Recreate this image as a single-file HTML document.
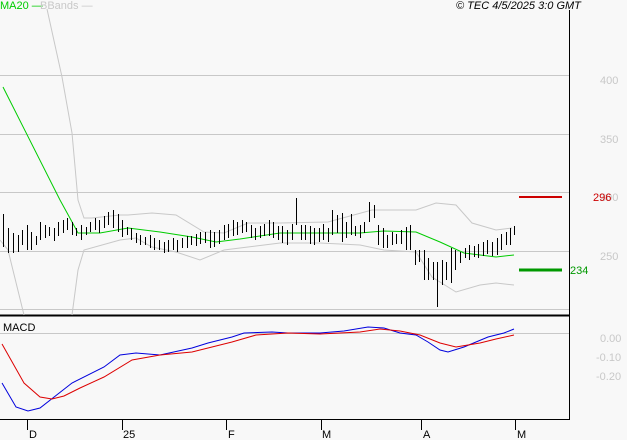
<!DOCTYPE html><html><head><style>body{margin:0;background:#f8f8f8}svg{display:block}text{font-family:"Liberation Sans",sans-serif;font-size:11px}</style></head><body>
<svg width="627" height="440" viewBox="0 0 627 440" xmlns="http://www.w3.org/2000/svg">
<rect width="627" height="440" fill="#f8f8f8"/>
<g stroke="#c8c8c8" stroke-width="1">
<line x1="0" y1="75.5" x2="569" y2="75.5"/><line x1="0" y1="134.5" x2="569" y2="134.5"/><line x1="0" y1="192.5" x2="569" y2="192.5"/><line x1="0" y1="251.5" x2="569" y2="251.5"/><line x1="0" y1="309.5" x2="569" y2="309.5"/><line x1="0" y1="333.5" x2="569" y2="333.5"/>
</g>
<line x1="569.5" y1="10" x2="569.5" y2="420" stroke="#000"/>
<line x1="0" y1="315.5" x2="569" y2="315.5" stroke="#000" stroke-width="2"/>
<line x1="0" y1="419.5" x2="569" y2="419.5" stroke="#000"/>
<g stroke="#000"><line x1="27.5" y1="420" x2="27.5" y2="430"/><line x1="122.5" y1="420" x2="122.5" y2="430"/><line x1="226.5" y1="420" x2="226.5" y2="430"/><line x1="321.5" y1="420" x2="321.5" y2="430"/><line x1="421.5" y1="420" x2="421.5" y2="430"/><line x1="515.5" y1="420" x2="515.5" y2="430"/></g>
<g font-size="12"><text x="29" y="438" font-size="12">D</text><text x="123" y="438" font-size="12">25</text><text x="228" y="438" font-size="12">F</text><text x="322" y="438" font-size="12">M</text><text x="423" y="438" font-size="12">A</text><text x="517" y="438" font-size="12">M</text></g>
<g fill="#c8c8c8"><text x="600" y="84">400</text><text x="600" y="143">350</text><text x="600" y="201">300</text><text x="600" y="260">250</text><text x="600" y="342">0.00</text><text x="596" y="361">-0.10</text><text x="596" y="380">-0.20</text></g>
<text x="0" y="9" fill="#00cc00" font-size="10">MA20 —</text><text x="40" y="9" fill="#c8c8c8" font-size="10">BBands —</text>
<text x="456" y="9" font-size="10" font-style="italic">© TEC 4/5/2025 3:0 GMT</text>
<text x="3" y="331" font-size="10">MACD</text>
<g fill="none" stroke="#c8c8c8">
<polyline points="47,9 62,77 72,133 78,200 84,218 92,218 120,215 128,215 152,213 176,215 204,232 224,233 248,223 280,223 328,222 372,210 416,210 436,203 456,205 472,223 496,230 512,228"/>
<polyline points="0,240 8,250 24,315"/>
<polyline points="72,315 78,270 84,250 120,240 136,238 152,247 176,252 200,260 224,250 280,243 320,243 360,245 384,250 416,252 432,277 456,292 480,285 496,283 514,285"/>
</g>
<polyline fill="none" stroke="#00cc00" points="3,87 60,200 71,220 78,233 100,233 128,228 160,232 192,237 216,242 240,239 280,233 320,233 360,233 384,231 416,232 440,242 464,253 496,257 514,255"/>
<line x1="519" y1="197" x2="562" y2="197" stroke="#cc0000" stroke-width="2"/><text x="593" y="201" fill="#cc0000">296</text>
<line x1="519" y1="270" x2="562" y2="270" stroke="#009900" stroke-width="3"/><text x="570" y="274" fill="#009900">234</text>
<path stroke="#000" fill="none" d="M3.5 214V247M8.5 228V253M13.5 233V253M18.5 235V252M22.5 230V245M27.5 225V250M31.5 232V250M36.5 236V245M40.5 222V240M45.5 225V238M49.5 227V236M54.5 228V241M58.5 222V236M63.5 220V233M67.5 218V230M72.5 222V235M76.5 228V236M81.5 225V240M86.5 227V235M90.5 222V232M95.5 218V230M99.5 220V233M104.5 216V228M108.5 212V225M113.5 210V228M118.5 214V232M122.5 220V237M127.5 227V235M131.5 228V240M136.5 233V243M140.5 235V245M145.5 237V245M150.5 235V248M154.5 238V250M159.5 240V250M164.5 242V253M168.5 240V252M173.5 238V250M177.5 240V252M182.5 238V248M187.5 236V248M191.5 236V245M196.5 234V246M200.5 232V244M205.5 232V243M210.5 230V248M214.5 232V247M219.5 230V244M224.5 225V240M228.5 224V238M233.5 220V236M237.5 222V235M242.5 220V233M246.5 222V232M251.5 225V238M255.5 228V240M260.5 226V238M264.5 224V236M269.5 220V236M273.5 222V238M278.5 226V240M282.5 226V243M287.5 230V245M292.5 224V240M296.5 198V225M301.5 225V240M305.5 225V240M310.5 226V244M314.5 228V245M319.5 228V242M323.5 224V240M328.5 228V242M332.5 210V235M337.5 215V233M342.5 213V242M346.5 222V238M351.5 214V235M355.5 226V236M360.5 225V238M364.5 222V233M369.5 202V222M374.5 205V218M378.5 225V245M383.5 228V248M387.5 235V248M392.5 232V245M396.5 234V244M401.5 230V244M406.5 227V250M410.5 225V250M415.5 250V265M419.5 250V262M424.5 250V280M428.5 258V280M433.5 262V280M437.5 262V307M442.5 260V285M446.5 262V280M451.5 248V283M455.5 250V270M460.5 252V263M465.5 248V258M469.5 245V260M474.5 246V257M478.5 244V258M483.5 242V256M487.5 240V254M492.5 242V256M497.5 238V255M501.5 234V250M506.5 232V245M510.5 228V245M514.5 226V235"/>
<polyline fill="none" stroke="#0000dd" points="2,383 16,407 28,411 40,408 72,383 104,367 120,355 136,353 160,355 192,348 208,343 232,337 244,333 272,332 288,333 320,333 344,331 368,327 384,328 400,333 416,335 428,342 440,350 448,352 464,347 488,337 504,333 514,329"/>
<polyline fill="none" stroke="#dd0000" points="2,344 24,383 40,397 52,399 64,396 80,388 104,377 132,360 160,355 192,352 232,342 256,335 288,333 320,334 360,332 380,329 400,331 420,335 440,343 456,347 480,343 496,339 514,335"/>
</svg>
</body></html>
